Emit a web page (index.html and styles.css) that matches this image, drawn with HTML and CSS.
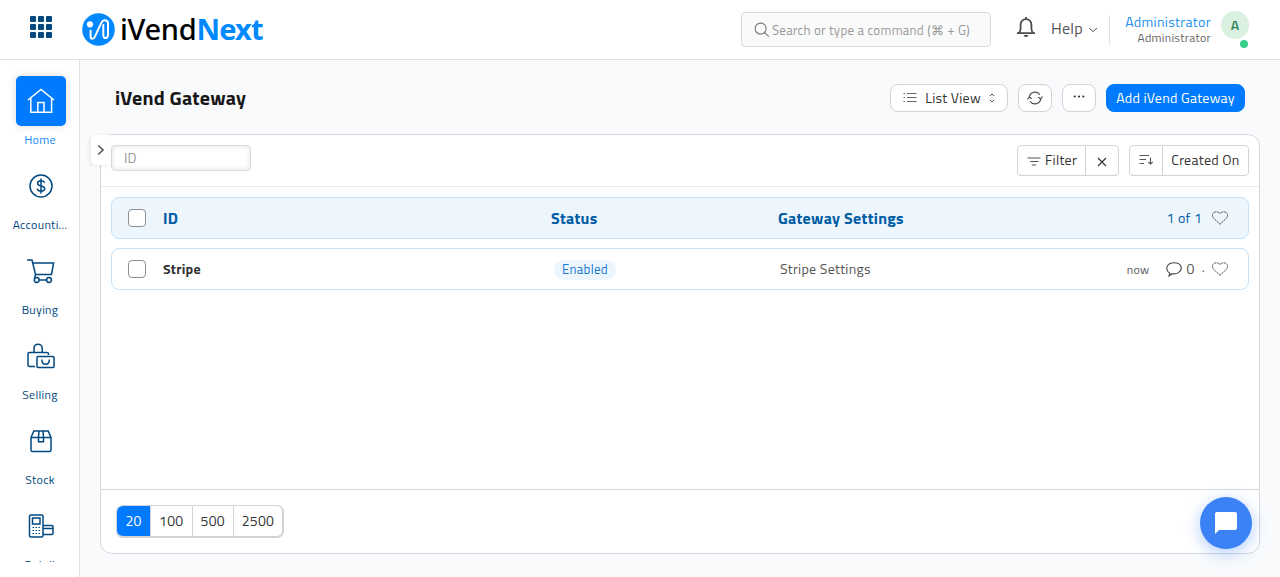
FILE: index.html
```html
<!DOCTYPE html>
<html lang="en">
<head>
<meta charset="UTF-8" />
<meta name="viewport" content="width=device-width, initial-scale=1" />
<title>iVend Gateway</title>
<link rel="stylesheet" href="styles.css">
</head>
<body>

<header class="navbar">
  <svg class="apps" width="22" height="22" viewBox="0 0 22 22" fill="#004880">
    <rect width="6" height="6" rx="1"/><rect x="8" width="6" height="6" rx="1"/><rect x="16" width="6" height="6" rx="1"/>
    <rect y="8" width="6" height="6" rx="1"/><rect x="8" y="8" width="6" height="6" rx="1"/><rect x="16" y="8" width="6" height="6" rx="1"/>
    <rect y="16" width="6" height="6" rx="1"/><rect x="8" y="16" width="6" height="6" rx="1"/><rect x="16" y="16" width="6" height="6" rx="1"/>
  </svg>
  <div class="logo">
    <svg width="33" height="33" viewBox="0 0 33 33">
      <circle cx="16.5" cy="16.5" r="16.3" fill="#0089ff"/>
      <circle cx="8" cy="11.3" r="3.1" fill="#fff"/>
      <path d="M8.600 17.500v6c0 3 3 2.800 4.200.4l6.600-14.200c1.700-3.600 6.600-3 6.600.8v11c0 4.600-4.700 4.600-4.700 1V12" fill="none" stroke="#fff" stroke-width="2" stroke-linecap="round"/>
    </svg>
    <span class="logo-text">iVend<b>Next</b></span>
  </div>
  <div class="search">
    <svg width="16" height="16" viewBox="0 0 16 16" fill="none" stroke="#777" stroke-width="1.1"><circle cx="6.6" cy="6.6" r="5.5"/><path d="M10.6 10.6l4.3 4"/></svg>
    <span>Search or type a command (⌘ + G)</span>
  </div>
  <svg class="bell" width="20" height="22" viewBox="0 0 20 22" fill="none" stroke="#4c4c4c" stroke-width="1.8">
    <path d="M1 17.100h18M3 17c1.200-1.400 1.600-2.600 1.600-4.800V8.500a5.400 5.400 0 0 1 10.800 0v3.700c0 2.200.4 3.400 1.600 4.800M10 3V1"/><path d="M7.500 19h5l-1.500 2h-2z" fill="#4c4c4c" stroke="none"/>
  </svg>
  <div class="help">Help <svg width="10" height="6" viewBox="0 0 10 6" fill="none" stroke="#555"><path d="M1 1l4 3.600L9 1"/></svg></div>
  <div class="user">
    <div class="user-name">Administrator</div>
    <div class="user-role">Administrator</div>
  </div>
  <div class="avatar">A<i class="online"></i></div>
</header>

<div class="page">
  <nav class="sidebar">
    <div class="items">
      <a class="item active">
        <span class="icon"><svg width="28" height="26" viewBox="0 0 28 26" fill="none" stroke="#fff" stroke-width="1.500"><path d="M1 12L14 1.500 27 12M3.800 10v14.200h20.800V10M10.800 24v-9.500h6.200V24"/></svg></span>
        <span class="label">Home</span>
      </a>
      <a class="item">
        <span class="icon"><svg width="26" height="26" viewBox="0 0 26 26" fill="none" stroke="#004880" stroke-width="1.500"><circle cx="13" cy="13" r="11"/><path d="M16.500 9.700c-.4-1.300-1.700-2-3.400-2-2.100 0-3.500.9-3.500 2.500 0 3.800 7.100 1.800 7.100 5.400 0 1.700-1.500 2.600-3.600 2.600-2 0-3.500-.9-3.800-2.600M13 5.500v15"/></svg></span>
        <span class="label">Accounti...</span>
      </a>
      <a class="item">
        <span class="icon"><svg width="28" height="26" viewBox="0 0 28 26" fill="none" stroke="#004880" stroke-width="1.500"><path d="M0 2h5l3.500 14.500M6 5h20.600l-2.100 11.500H8.500l-.8 3.300h1M12 22h7.600"/><circle cx="9.700" cy="22" r="2.400"/><circle cx="22" cy="22" r="2.400"/></svg></span>
        <span class="label">Buying</span>
      </a>
      <a class="item">
        <span class="icon"><svg width="28" height="26" viewBox="0 0 28 26" fill="none" stroke="#004880" stroke-width="1.500"><path d="M8 23.500H2.500c-1 0-1.500-.5-1.500-1.500V11c0-1 .5-1.500 1.500-1.500H20c1 0 1.500.5 1.500 1.500v1M7 9.500V5.300a4.100 4.100 0 0 1 8.200 0v4.200"/><rect x="10" y="13.500" width="17" height="11" rx="1"/><path d="M14.800 16.500c.2 6.400 7.400 6.400 7.600 0"/></svg></span>
        <span class="label">Selling</span>
      </a>
      <a class="item">
        <span class="icon"><svg width="26" height="26" viewBox="0 0 26 26" fill="none" stroke="#004880" stroke-width="1.500"><path d="M3 9.500L5.800 3h14.400L23 9.500V22c0 1-.5 1.500-1.500 1.500h-17c-1 0-1.500-.5-1.500-1.500zM3 9.500h20M11 3l-.5 6v4.800h5V9L15 3"/></svg></span>
        <span class="label">Stock</span>
      </a>
      <a class="item">
        <span class="icon"><svg width="26" height="26" viewBox="0 0 26 26" fill="none" stroke="#004880" stroke-width="1.500"><rect x="1.500" y="2" width="13.500" height="22" rx="1.500"/><path d="M4.500 5h7.500v6H4.500z"/><path d="M4.500 14.500H12M4.500 17.500H12M4.500 20.500H12" stroke-dasharray="1.500 1.500" stroke-width="1.200"/><path d="M15 12.500h9c.6 0 1 .4 1 1v7c0 .6-.4 1-1 1h-9M15 15.500h10"/></svg></span>
        <span class="label">Retail</span>
      </a>
    </div>
  </nav>

  <main class="content">
    <div class="page-head">
      <h1>iVend Gateway</h1>
      <button class="btn btn-view">
        <svg width="14" height="12" viewBox="0 0 14 12" stroke="#666" stroke-width="1.100"><path d="M4 1.500h9.500M4 5.500h9.500M4 9.500h9.500"/><path d="M.5 1.500h1.500M.5 5.500h1.500M.5 9.500h1.500"/></svg>
        <span>List View</span>
        <svg width="6" height="10" viewBox="0 0 6 10" fill="none" stroke="#444"><path d="M1 3l2-2 2 2M1 7l2 2 2-2"/></svg>
      </button>
      <button class="btn btn-icon">
        <svg width="16" height="14" viewBox="0 0 16 14" fill="none" stroke="#444" stroke-width="1.100"><path d="M2.200 6.500A5.900 5.900 0 0 1 13 3.800M13.800 7.500A5.900 5.900 0 0 1 3 10.200M.5 8.500L2.300 6l2.500 1.700M15.500 5.500L13.700 8l-2.500-1.700"/></svg>
      </button>
      <button class="btn btn-icon">
        <svg class="dots" width="12" height="3" viewBox="0 0 12 3" fill="#333"><circle cx="1.700" cy="1.500" r="1.100"/><circle cx="6" cy="1.500" r="1.100"/><circle cx="10.300" cy="1.500" r="1.100"/></svg>
      </button>
      <button class="btn btn-primary">Add iVend Gateway</button>
    </div>

    <section class="card">
      <div class="toggle"><svg width="8" height="12" viewBox="0 0 8 12" fill="none" stroke="#555" stroke-width="1.600"><path d="M1.200 1.500L6 6l-4.800 4.500"/></svg></div>
      <div class="filters">
        <input class="id-filter" type="text" placeholder="ID">
        <div class="group group-filter">
          <span><svg width="14" height="9" viewBox="0 0 14 9" stroke="#555" stroke-width="1.100"><path d="M.5 1h13M3 4.500h8.500M5 8h4"/></svg>Filter</span>
          <span><svg width="10" height="10" viewBox="0 0 10 10" stroke="#333" stroke-width="1.100"><path d="M1 1l8 8M9 1l-8 8"/></svg></span>
        </div>
        <div class="group group-sort">
          <span><svg width="15" height="11" viewBox="0 0 15 11" fill="none" stroke="#555" stroke-width="1.100"><path d="M.5 1.500H10M.5 5.500H7M.5 9.500H5M11.500 3.500v6.500M9.300 8l2.200 2 2.200-2"/></svg></span>
          <span>Created On</span>
        </div>
      </div>

      <div class="list">
        <div class="row row-head">
          <i class="check"></i>
          <span class="col-id">ID</span>
          <span class="col-status">Status</span>
          <span class="col-settings">Gateway Settings</span>
          <span class="count">1 of 1</span>
          <svg class="heart" width="16" height="14" viewBox="0 0 16 14"><path d="M8 13.300L1.200 6.800C-.6 4 1.200.8 4 .8c1.500 0 2.600.4 4 1.600C9.400 1.200 10.500.8 12 .8c2.800 0 4.600 3.200 2.800 6z"/></svg>
        </div>
        <div class="row row-item">
          <i class="check"></i>
          <span class="col-id">Stripe</span>
          <span class="col-status"><em class="pill">Enabled</em></span>
          <span class="col-settings">Stripe Settings</span>
          <span class="time">now</span>
          <svg width="16" height="15" viewBox="0 0 16 15" fill="none" stroke="#444" stroke-width="1.100"><path d="M3.700 11.300C-1.500 8 .5.8 8 .8s9.500 6.500 4.500 9.800c-2 1.300-4.500 1.500-6.500 1.100L3 14z"/></svg>
          <span class="comments">0</span>
          <span class="dot">·</span>
          <svg class="heart" width="16" height="14" viewBox="0 0 16 14"><path d="M8 13.300L1.200 6.800C-.6 4 1.200.8 4 .8c1.500 0 2.600.4 4 1.600C9.400 1.200 10.500.8 12 .8c2.800 0 4.600 3.200 2.800 6z"/></svg>
        </div>
      </div>

      <div class="paging">
        <div class="pages"><span class="on">20</span><span>100</span><span>500</span><span>2500</span></div>
      </div>
    </section>
  </main>
</div>

<div class="chat"><svg width="22" height="22" viewBox="0 0 22 22" fill="#fff"><path d="M2 0h18c1.200 0 2 .8 2 2v14c0 1.200-.8 2-2 2H4l-4 4V2C0 .8.800 0 2 0z"/></svg></div>

</body>
</html>
```
FILE: styles.css
```css
* {
  box-sizing: border-box;
}
body {
  margin: 0;
  height: 577px;
  overflow: hidden;
  font-family: "Titillium Web", "Noto Sans", sans-serif;
  font-size: 14px;
  letter-spacing: 0.02em;
  color: #333;
  background: #f8fafc;
}
svg {
  display: block;
  flex: none;
}
.navbar {
  display: flex;
  align-items: center;
  height: 60px;
  padding: 0 30px;
  background: #fff;
  border-bottom: 1px solid #dfe2e5;
}
.apps {
  margin: -5px 30px 0 0;
}
.logo {
  display: flex;
  align-items: center;
  gap: 5px;
  width: 659px;
}
.logo-text {
  margin-top: -2px;
  font-family: "Noto Sans", sans-serif;
  font-size: 29px;
  font-weight: 500;
  line-height: 36px;
  letter-spacing: -0.3px;
  color: #000;
}
.logo-text b {
  letter-spacing: -0.8px;
  color: #0089ff;
}
.search {
  display: flex;
  align-items: center;
  gap: 2px;
  width: 250px;
  height: 35px;
  padding-left: 12px;
  border: 1px solid #d9dbdc;
  border-radius: 4px;
  background: #f9fafa;
  color: #999;
  font-size: 13px;
  letter-spacing: 0.28px;
  white-space: nowrap;
}
.bell {
  margin: -5px 15px 0 25px;
}
.help {
  display: flex;
  align-items: center;
  gap: 5px;
  width: 59px;
  height: 30px;
  font-size: 16px;
  line-height: 24px;
  color: #555;
  padding-bottom: 3px;
  border-right: 1px solid #dfe2e5;
}
.help svg {
  margin-top: 3px;
}
.user {
  width: 101px;
  margin-top: -1px;
  text-align: right;
}
.user-name {
  line-height: 17px;
  letter-spacing: 0.33px;
  color: #2490ef;
}
.user-role {
  font-size: 12px;
  line-height: 16px;
  color: #666;
}
.avatar {
  position: relative;
  width: 28px;
  height: 28px;
  margin: -9px 0 0 10px;
  border-radius: 50%;
  background: #daf0e1;
  color: #33845e;
  font-weight: 600;
  line-height: 28px;
  text-align: center;
}
.online {
  position: absolute;
  right: 1px;
  bottom: -9px;
  width: 8px;
  height: 8px;
  border-radius: 50%;
  background: #38cf8b;
}
.page {
  display: flex;
  height: 517px;
}
.sidebar {
  width: 80px;
  background: #fff;
  border-right: 1px solid #dfe2e5;
}
.items {
  height: 502px;
  padding-top: 16px;
  overflow: hidden;
}
.item {
  display: flex;
  flex-direction: column;
  align-items: center;
  height: 85px;
  padding-left: 2px;
  color: #004880;
}
.icon {
  display: flex;
  align-items: center;
  justify-content: center;
  width: 50px;
  height: 50px;
  border-radius: 5px;
}
.label {
  margin: 5px 1px 0 0;
  font-size: 12px;
  line-height: 18px;
  letter-spacing: 0.32px;
}
.active {
  color: #1686f8;
}
.active .icon {
  background: #007bff;
  box-shadow: 0 0 8px rgba(0, 0, 0, 0.15);
}
.content {
  flex: 1;
  padding: 0 20px;
}
.page-head {
  display: flex;
  align-items: center;
  gap: 10px;
  height: 74px;
  padding: 2px 15px 0;
}
h1 {
  flex: 1;
  margin: 0;
  font-size: 20px;
  line-height: 28px;
  letter-spacing: 0.2px;
  color: #171717;
}
.btn {
  display: flex;
  align-items: center;
  justify-content: center;
  height: 28px;
  padding: 0;
  border: 1px solid #d1d3d8;
  border-radius: 8px;
  background: #fff;
  color: #333;
  font: inherit;
  letter-spacing: inherit;
  white-space: nowrap;
}
.btn-view {
  width: 118px;
  gap: 6px;
}
.btn-view span {
  width: 60px;
  padding-bottom: 2px;
}
.btn-icon {
  width: 34px;
}
.dots {
  margin-top: -3px;
}
.btn-primary {
  width: 139px;
  padding-bottom: 2px;
  border-color: #007bff;
  background: #007bff;
  color: #fff;
}
.card {
  position: relative;
  display: flex;
  flex-direction: column;
  height: 420px;
  background: #fff;
  border: 1px solid #d5d8dc;
  border-radius: 12px;
}
.toggle {
  position: absolute;
  left: -10px;
  top: 0;
  display: flex;
  align-items: center;
  width: 20px;
  height: 30px;
  padding-left: 6px;
  border-radius: 5px 0 0 5px;
  background: #fff;
  box-shadow: -2px 1px 4px rgba(0, 0, 0, 0.07);
}
.filters {
  display: flex;
  gap: 10px;
  height: 52px;
  padding: 10px;
  border-bottom: 1px solid #ebebee;
}
.id-filter {
  width: 140px;
  height: 26px;
  margin-right: auto;
  padding: 0 12px 2px;
  border: 1px solid #dadcde;
  border-radius: 4px;
  box-shadow: inset 0 0 5px rgba(0, 0, 0, 0.13);
  font: inherit;
}
.id-filter::placeholder {
  color: #999;
}
.group {
  display: flex;
  height: 31px;
  border: 1px solid #d1d3d8;
  border-radius: 4px;
  white-space: nowrap;
}
.group span {
  display: flex;
  align-items: center;
  justify-content: center;
  gap: 4px;
  padding-bottom: 2px;
}
.group span + span {
  flex: 1;
  border-left: 1px solid #d1d3d8;
}
.group-filter {
  width: 102px;
}
.group-filter span:first-child {
  width: 67px;
  padding-left: 1px;
}
.group-filter svg {
  margin-top: 4px;
}
.group-sort {
  width: 120px;
}
.group-sort span:first-child {
  width: 32px;
}
.list {
  flex: 1;
  padding: 10px;
}
.row {
  display: flex;
  align-items: center;
  height: 42px;
  margin-bottom: 9px;
  padding: 0 20px 0 16px;
  border: 1px solid #c4e3fa;
  border-radius: 8px;
  color: #555;
}
.check {
  width: 18px;
  height: 18px;
  margin-right: 17px;
  border: 1px solid #8d8f92;
  border-radius: 4px;
  background: #fff;
}
.col-id {
  width: 391px;
  font-weight: 700;
  color: #333;
}
.col-status {
  width: 226px;
}
.col-settings {
  flex: 1;
}
.row-item .col-id,
.row-item .col-settings,
.comments,
.count {
  padding-bottom: 2px;
}
.row-head {
  background: #edf5fd;
  color: #005ca3;
  font-size: 16px;
  font-weight: 700;
}
.row-head .col-id {
  width: 388px;
  color: #005ca3;
}
.row-head .col-status {
  width: 227px;
}
.pill {
  display: inline-block;
  height: 20px;
  padding: 0 8px;
  border-radius: 10px;
  background: #edf6fd;
  color: #1579d0;
  font-size: 13px;
  font-style: normal;
  line-height: 18px;
}
.count {
  margin-right: 10px;
  font-size: 14px;
  font-weight: 400;
}
.time {
  margin-right: 16px;
  font-size: 12px;
}
.comments {
  margin: 0 7px 0 5px;
}
.dot {
  margin-right: 7px;
}
.heart {
  fill: none;
  stroke: #555;
  stroke-dasharray: 2 0.6;
}
.paging {
  height: 64px;
  padding: 15px;
  border-top: 1px solid #d5d8dc;
}
.pages {
  display: flex;
  width: 168px;
  height: 33px;
  overflow: hidden;
  border: 1px solid #d1d3d8;
  border-width: 1px 2px 2px 1px;
  border-radius: 7px;
}
.pages span {
  flex: 0 0 41.5px;
  border-left: 1px solid #d1d3d8;
  line-height: 30px;
  text-align: center;
}
.pages span:last-child {
  flex: 1;
}
.pages .on {
  flex-basis: 33px;
  border: 0;
  background: #007bff;
  color: #fff;
}
.chat {
  position: fixed;
  right: 28px;
  bottom: 28px;
  display: flex;
  align-items: center;
  justify-content: center;
  width: 52px;
  height: 52px;
  border-radius: 50%;
  background: #3b82f6;
  box-shadow: 0 4px 16px rgba(59, 130, 246, 0.4);
}
```
